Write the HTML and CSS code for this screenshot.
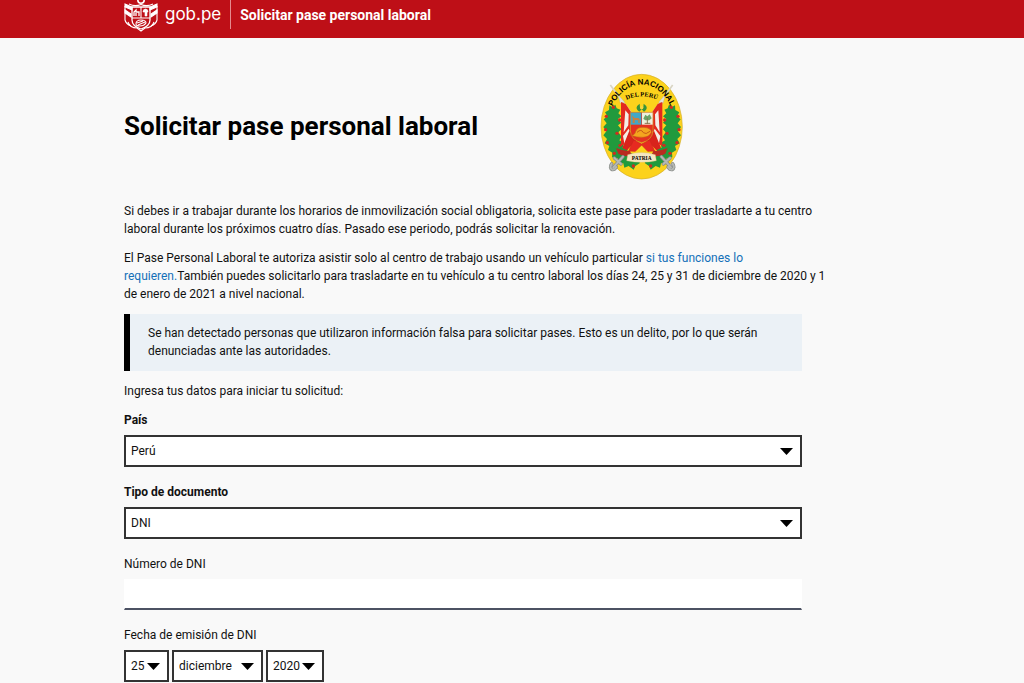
FILE: index.html
```html
<!DOCTYPE html>
<html lang="es">
<head>
  <meta charset="UTF-8">
  <meta name="viewport" content="width=device-width, initial-scale=1">
  <title>Solicitar pase personal laboral | gob.pe</title>
  <link rel="stylesheet" href="styles.css">
</head>
<body>

  <header class="header">
    <div class="container header-content">
      <a href="#" class="logo">
        <svg class="logo-shield" viewBox="0 0 34 32" fill="none" stroke="#fff" stroke-width="1.1" aria-hidden="true">
          <circle cx="17" cy="0" r="3.2" stroke-width="1.6"/>
          <path d="M5 4 Q11 7 17 4.500 Q23 7 29 4"/>
          <path d="M1 4 L8 7 V10 L1 7 Z M33 4 L26 7 V10 L33 7 Z" fill="#fff"/>
          <path d="M1 10 L7 14 V17 L1 13 Z M33 10 L27 14 V17 L33 13 Z" fill="#fff"/>
          <path d="M1 6 V20 Q2 24 7 26 M33 6 V20 Q32 24 27 26" />
          <path d="M8 7 H26 V20 Q26 26 17 29 Q8 26 8 20 Z" stroke-width="1.3"/>
          <path d="M8 18 H26 M17 7 V18"/>
          <path d="M10 16 V12 L12 10 V12 H15 V16 M12 16 V13" stroke-width="1.3"/>
          <path d="M19 12 Q19 9 21.500 9 Q24 9 24 12 Z M21 12 H23 V16 H21 Z" fill="#fff" stroke-width="0.6"/>
          <path d="M12 24 Q12 20 17 20 Q22 20 22 23 Q20 26 16 26 Q12 26 12 24 M13 23 L19 21 M14 25 L21 22"/>
          <path d="M4 22 Q6 28 13 28 L17 31 L21 28 Q28 28 30 22"/>
        </svg>
        <span class="logo-name">gob.pe</span>
      </a>
      <span class="header-title">Solicitar pase personal laboral</span>
    </div>
  </header>

  <main class="container">

    <div class="hero">
      <h1>Solicitar pase personal laboral</h1>
      <svg class="emblem" viewBox="0 0 285 348" role="img" aria-label="Policía Nacional del Perú">
        <defs>
          <path id="arc-outer" d="M52 119 A98 124 0 0 1 228 119"/>
          <path id="arc-inner" d="M89 98 Q140 72 192 98"/>
        </defs>
        <ellipse cx="140" cy="176" rx="122" ry="157" fill="#fcd21c" stroke="#d3ae2a" stroke-width="2"/>

        <!-- laureles -->
        <g fill="#219a3d">
          <path d="M43 112 L52 117 L61 110 L65 121 L76 125 L70 136 L79 145 L69 153 L79 164 L69 172 L79 184 L70 193 L80 206 L73 217 L87 225 L83 239 L98 241 L96 256 L112 256 L112 269 L126 270 L135 285 L121 294 L116 305 L101 294 L88 299 L85 286 L70 286 L68 271 L51 268 L52 254 L39 246 L43 234 L29 226 L36 213 L25 202 L34 190 L25 177 L35 166 L26 154 L37 145 L30 133 L42 126 Z"/>
          <path d="M240 112 L231 117 L222 110 L218 121 L208 125 L214 136 L204 145 L214 153 L204 164 L214 172 L204 184 L212 193 L203 206 L210 217 L196 225 L200 239 L185 241 L187 256 L171 256 L171 269 L157 270 L149 285 L162 294 L167 305 L182 294 L195 299 L198 286 L213 286 L215 271 L232 268 L231 254 L244 246 L240 234 L254 226 L247 213 L258 202 L249 190 L258 177 L248 166 L257 154 L246 145 L253 133 L241 126 Z"/>
        </g>
        <g fill="#d22a20">
          <circle cx="55" cy="118" r="5"/><circle cx="34" cy="145" r="5"/><circle cx="74" cy="156" r="5"/>
          <circle cx="32" cy="185" r="5"/><circle cx="66" cy="196" r="5"/><circle cx="37" cy="224" r="5"/>
          <circle cx="75" cy="232" r="5"/><circle cx="58" cy="256" r="5"/><circle cx="106" cy="264" r="5"/>
          <circle cx="115" cy="294" r="5"/><circle cx="229" cy="118" r="5"/><circle cx="249" cy="145" r="5"/>
          <circle cx="209" cy="156" r="5"/><circle cx="252" cy="185" r="5"/><circle cx="216" cy="196" r="5"/>
          <circle cx="246" cy="224" r="5"/><circle cx="207" cy="232" r="5"/><circle cx="225" cy="256" r="5"/>
          <circle cx="177" cy="264" r="5"/><circle cx="167" cy="294" r="5"/>
        </g>

        <!-- banderas -->
        <path d="M46 51 L107 133 M233 51 L174 133" stroke="#d9d5c4" stroke-width="5"/>
        <path d="M69 81 L76 106 L88 101 Z M211 81 L204 106 L192 101 Z" fill="#e5e3dc" stroke="#aaa79b"/>
        <path d="M78 102 L92 108 L108 132 L105 218 L78 234 Z M202 102 L188 108 L172 132 L175 218 L202 234 Z" fill="#e3291f"/>
        <path d="M91 127 L101 139 L100 172 L86 193 Z M190 127 L180 139 L181 172 L194 193 Z" fill="#f4eee7"/>
        <path d="M84 204 L101 182 L112 212 L89 231 Z M196 204 L179 182 L168 212 L191 231 Z" fill="#f5eee4"/>
        <path d="M103 188 L125 216 L96 247 L82 240 Z M177 188 L155 216 L184 247 L198 240 Z" fill="#d8231c"/>

        <!-- escudo -->
        <path d="M106 133 H174 V188 Q172 217 140 224 Q108 217 106 188 Z" fill="#e43121" stroke="#d0a923" stroke-width="2"/>
        <path d="M107 134 H139 V170 H107 Z" fill="#42a8c7"/>
        <path d="M141 134 H173 V170 H141 Z" fill="#edf0dd"/>
        <path d="M113 165 V151 L110 142 L115 146 L119 150 H130 L134 153 V165 H130 V157 L119 156 V165 Z" fill="#c68142"/>
        <path d="M145 152 L151 140 L157 145 L164 139 L170 151 L163 157 H151 Z" fill="#6aa569"/>
        <path d="M157 149 V168 M149 166 H166" stroke="#887650" stroke-width="3"/>
        <path d="M107 202 Q119 203 122 190 Q127 176 147 178 Q169 180 169 193 Q164 207 144 208 Q124 209 107 202 Z" fill="#f4a51f" stroke="#c75a18" stroke-width="2"/>
        <path d="M126 193 Q139 181 145 194 Q152 201 165 190" fill="none" stroke="#c75a18" stroke-width="3"/>
        <path d="M134 107 Q116 119 133 131 L140 124 L135 119 Z M146 107 Q164 119 147 131 L140 124 L145 119 Z" fill="#36933c"/>
        <circle cx="140" cy="119" r="5" fill="#f5d543"/>

        <!-- cintas -->
        <path d="M116 216 L140 228 L164 216 L179 249 L158 250 L140 231 L121 250 L101 249 Z" fill="#e62a21" stroke="#cf241c" stroke-width="2"/>
        <path d="M63 240 Q86 250 105 249 L112 265 Q86 266 70 257 Z M218 240 Q194 250 175 249 L168 265 Q194 266 211 257 Z" fill="#b92b20"/>
        <path d="M98 260 Q140 247 181 260 L184 278 Q140 288 95 278 Z" fill="#f4e7c1" stroke="#d9c06a"/>
        <text class="emblem-motto" x="140" y="276" text-anchor="middle">PATRIA</text>

        <!-- espadas -->
        <g fill="none" stroke="#858885" stroke-width="10" stroke-linecap="round">
          <path d="M55 298 L84 266 M58 270 L78 288 M50 287 Q42 300 52 305 Q59 306 64 297"/>
          <path d="M228 298 L199 266 M225 270 L205 288 M233 287 Q241 300 231 305 Q224 306 219 297"/>
        </g>
        <g fill="none" stroke="#b5b8b4" stroke-width="6" stroke-linecap="round">
          <path d="M55 298 L84 266 M58 270 L78 288 M50 287 Q42 300 52 305 Q59 306 64 297"/>
          <path d="M228 298 L199 266 M225 270 L205 288 M233 287 Q241 300 231 305 Q224 306 219 297"/>
        </g>

        <text class="emblem-name"><textPath href="#arc-outer" startOffset="50%" text-anchor="middle">POLICÍA NACIONAL</textPath></text>
        <text class="emblem-country"><textPath href="#arc-inner" startOffset="50%" text-anchor="middle">DEL PERÚ</textPath></text>
      </svg>
    </div>

    <div class="intro">
      <p>Si debes ir a trabajar durante los horarios de inmovilización social obligatoria, solicita este pase para poder trasladarte a tu centro<br>
      laboral durante los próximos cuatro días. Pasado ese periodo, podrás solicitar la renovación.</p>
      <p>El Pase Personal Laboral te autoriza asistir solo al centro de trabajo usando un vehículo particular <a href="#">si tus funciones lo<br>
      requieren.</a>También puedes solicitarlo para trasladarte en tu vehículo a tu centro laboral los días 24, 25 y 31 de diciembre de 2020 y 1<br>
      de enero de 2021 a nivel nacional.</p>
    </div>

    <div class="content">
      <div class="notice">
        Se han detectado personas que utilizaron información falsa para solicitar pases. Esto es un delito, por lo que serán<br>
        denunciadas ante las autoridades.
      </div>

      <form>
        <p>Ingresa tus datos para iniciar tu solicitud:</p>

        <div class="field">
          <label class="label-bold" for="pais">País</label>
          <select id="pais" name="pais">
            <option>Perú</option>
          </select>
        </div>

        <div class="field">
          <label class="label-bold" for="tipo">Tipo de documento</label>
          <select id="tipo" name="tipo">
            <option>DNI</option>
          </select>
        </div>

        <div class="field">
          <label for="numero">Número de DNI</label>
          <input type="text" id="numero" name="numero">
        </div>

        <div class="field">
          <label for="dia">Fecha de emisión de DNI</label>
          <div class="date">
            <select id="dia" name="dia" class="date-day">
              <option>25</option>
            </select>
            <select name="mes" class="date-month" aria-label="Mes de emisión">
              <option>diciembre</option>
            </select>
            <select name="anio" class="date-year" aria-label="Año de emisión">
              <option>2020</option>
            </select>
          </div>
        </div>
      </form>
    </div>

  </main>

</body>
</html>
```

FILE: styles.css
```css
* {
  box-sizing: border-box;
}
body {
  margin: 0;
  background: #f9f9f9;
  color: #111;
  font-family: Roboto, Arial, sans-serif;
  font-size: 12px;
  line-height: 18px;
}
.container {
  max-width: 776px;
  margin: 0 auto;
}
.content,
.hero {
  max-width: 678px;
}
.intro {
  max-width: 712px;
}

/* Cabecera */
.header {
  background: #be0f17;
  color: #fff;
}
.header-content {
  display: flex;
  align-items: flex-start;
  padding-bottom: 7px;
}
.logo {
  display: flex;
  align-items: center;
  gap: 7px;
  height: 31px;
  padding-right: 9px;
  color: #fff;
}
.logo-shield {
  width: 34px;
  height: 32px;
}
.logo-name {
  font-family: Inter, sans-serif;
  font-size: 17px;
  line-height: 28px;
  padding-bottom: 3px;
}
.header-title {
  height: 29px;
  padding-left: 9px;
  border-left: 1px solid #e58a8e;
  font-size: 14px;
  font-weight: bold;
  line-height: 31px;
}

/* Título y emblema */
.hero {
  display: flex;
  align-items: center;
  justify-content: space-between;
  padding: 30px 112px 18px 0;
}
h1 {
  margin: 0;
  color: #000;
  font-size: 26px;
  line-height: 32px;
}
.emblem {
  flex: none;
  width: 95px;
  height: 116px;
}
.emblem-name,
.emblem-country,
.emblem-motto {
  font-family: "Liberation Serif", serif;
  font-weight: bold;
}
.emblem-name {
  font-family: "Liberation Sans", sans-serif;
  font-size: 24px;
}
.emblem-country {
  font-size: 19px;
}
.emblem-motto {
  font-size: 16px;
}

p {
  margin: 0 0 11px;
}
a {
  color: #1470b8;
  text-decoration: none;
}
.notice {
  margin-bottom: 11px;
  padding: 10px 18px 11px;
  border-left: 6px solid #000;
  background: #ebf1f6;
}

/* Formulario */
.field {
  margin-bottom: 16px;
}
label {
  display: block;
  margin-bottom: 6px;
}
.label-bold {
  font-weight: bold;
}
input,
select {
  display: block;
  width: 100%;
  padding: 0 5px;
  border-radius: 0;
  background-color: #fff;
  color: #111;
  font: inherit;
}
input {
  height: 31px;
  border: 1px solid #fff;
  border-bottom: 2px solid #4c5263;
}
select {
  height: 32px;
  appearance: none;
  border: 2px solid #333;
  background-image: url("data:image/svg+xml,%3Csvg xmlns='http://www.w3.org/2000/svg' viewBox='0 0 13 7'%3E%3Cpath d='M0 0h13L6.5 7z'/%3E%3C/svg%3E");
  background-repeat: no-repeat;
  background-position: right 7px center;
  background-size: 13px 7px;
}
.date {
  display: flex;
  gap: 3px;
}
.date-day {
  width: 45px;
}
.date-month {
  width: 91px;
}
.date-year {
  width: 58px;
}
```
